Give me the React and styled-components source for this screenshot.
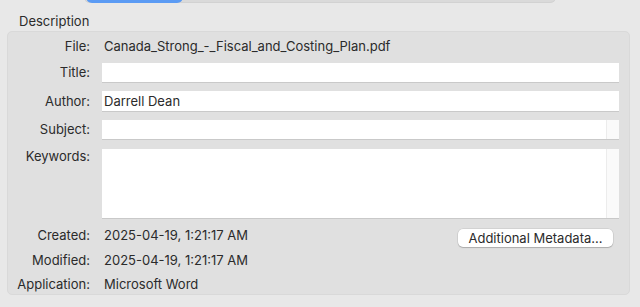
import styled, { createGlobalStyle } from 'styled-components';

const GlobalStyle = createGlobalStyle`
  html, body {
    margin: 0;
    padding: 0;
    background: #e8e8e8;
    font-family: Inter, "Liberation Sans", sans-serif;
    font-size: 13px;
    color: #2b2b2b;
    -webkit-font-smoothing: antialiased;
  }
`;

// Styled Components
const Page = styled.div`
  width: 640px;
  height: 307px;
  overflow: hidden;
  display: flex;
  flex-direction: column;
`;

const TabStrip = styled.div`
  height: 3px;
  overflow: hidden;
  display: flex;
  justify-content: center;
`;

const Segmented = styled.div`
  display: flex;
  width: 468px;
  height: 22px;
  margin-top: -19px;
  padding: 0 2px;
  background: #dadada;
  border-radius: 6px;
  box-shadow: inset 0 -1px 0 #d2d2d2;
`;

const Segment = styled.div`
  width: ${(p) => p.$width}px;
  height: 100%;
  border-radius: 6px;
  background: ${(p) => (p.$active ? '#5b9bf4' : 'transparent')};
`;

const SectionTitle = styled.div`
  padding: 8px 0 0 19px;
  height: 20px;
  line-height: 20px;
`;

// rows: file, title, author, subject, keywords, created, modified, application
const Panel = styled.div`
  margin: 0 10px 0 7px;
  height: 264px;
  box-sizing: border-box;
  background: #e0e0e0;
  border: 1px solid #d9d9d9;
  border-radius: 5px;
  padding: 4px 10px 0 0;
  display: grid;
  grid-template-columns: 82px 1fr;
  column-gap: 12px;
  grid-template-rows: 27px 28px 29px 29px 76px 25px 24px 20px;
  align-items: start;
`;

const Label = styled.div`
  text-align: right;
  line-height: ${(p) => p.$lh || 20}px;
`;

const Value = styled.div`
  height: 20px;
  line-height: 20px;
  padding-left: 2px;
  display: flex;
  align-items: flex-start;
  justify-content: space-between;
`;

const Field = styled.div`
  height: ${(p) => p.$height || 19}px;
  background: #fff;
  box-shadow: 0 1px 0 #c9c9c9;
  display: flex;
  line-height: ${(p) => p.$height || 19}px;
  padding-left: 2px;
`;

const FieldText = styled.div`
  flex: 1;
`;

const ScrollTrack = styled.div`
  width: 12px;
  background: #fafafa;
  border-left: 1px solid #ececec;
`;

const Button = styled.div`
  width: 155px;
  height: 18px;
  margin: 4px 6px 0 0;
  box-sizing: border-box;
  background: #fff;
  border-radius: 5px;
  box-shadow: 0 0 0 0.5px rgba(0, 0, 0, 0.12), 0 1px 1px rgba(0, 0, 0, 0.18);
  text-align: center;
  line-height: 18px;
`;

function App() {
  return (
    <Page>
      <GlobalStyle />
      <TabStrip>
        <Segmented>
          <Segment $width={97} $active />
        </Segmented>
      </TabStrip>
      <SectionTitle>Description</SectionTitle>
      <Panel>
        <Label>File:</Label>
        <Value>Canada_Strong_-_Fiscal_and_Costing_Plan.pdf</Value>

        <Label $lh={19}>Title:</Label>
        <Field />

        <Label>Author:</Label>
        <Field $height={20}>
          <FieldText>Darrell Dean</FieldText>
        </Field>

        <Label $lh={19}>Subject:</Label>
        <Field>
          <FieldText />
          <ScrollTrack />
        </Field>

        <Label $lh={15}>Keywords:</Label>
        <Field $height={69}>
          <FieldText />
          <ScrollTrack />
        </Field>

        <Label>Created:</Label>
        <Value>
          <span>2025-04-19, 1:21:17 AM</span>
          <Button>Additional Metadata...</Button>
        </Value>

        <Label>Modified:</Label>
        <Value>2025-04-19, 1:21:17 AM</Value>

        <Label>Application:</Label>
        <Value>Microsoft Word</Value>
      </Panel>
    </Page>
  );
}

export default App;
